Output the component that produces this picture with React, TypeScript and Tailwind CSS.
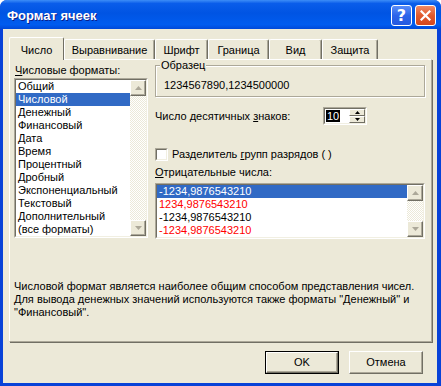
import React from 'react';

const formats = [
  'Общий',
  'Числовой',
  'Денежный',
  'Финансовый',
  'Дата',
  'Время',
  'Процентный',
  'Дробный',
  'Экспоненциальный',
  'Текстовый',
  'Дополнительный',
  '(все форматы)',
];

const negatives = [
  { text: '-1234,9876543210', red: false },
  { text: '1234,9876543210', red: true },
  { text: '-1234,9876543210', red: false },
  { text: '-1234,9876543210', red: true },
];

const tabs = [
  { label: 'Выравнивание', width: 'w-[91px]' },
  { label: 'Шрифт', width: 'w-[53px]' },
  { label: 'Граница', width: 'w-[61px]' },
  { label: 'Вид', width: 'w-[53px]' },
  { label: 'Защита', width: 'w-[56px]' },
];

const Arrow: React.FC<{ down?: boolean }> = ({ down }) => (
  <svg width="7" height="4" viewBox="0 0 7 4" className="block">
    {down ? <path d="M0 0h7L3.5 4z" fill="#ACA899" /> : <path d="M3.5 0L7 4H0z" fill="#ACA899" />}
  </svg>
);

const ScrollButton: React.FC<{ down?: boolean }> = ({ down }) => (
  <div className="w-[16px] h-[16px] flex items-center justify-center bg-[#ECE9D8] border border-t-white border-l-white border-r-[#716F64] border-b-[#716F64] shadow-[inset_-1px_-1px_0_#ACA899]">
    <Arrow down={down} />
  </div>
);

const ScrollBar: React.FC = () => (
  <div className="w-[16px] flex flex-col shrink-0">
    <ScrollButton />
    <div className="flex-1 bg-[repeating-conic-gradient(#ffffff_0_25%,#ece9d8_0_50%)] bg-[length:2px_2px]" />
    <ScrollButton down />
  </div>
);

// classic 2px sunken frame
const Sunken: React.FC<{ className?: string; children: React.ReactNode }> = ({ className, children }) => (
  <div className={`border border-t-[#ACA899] border-l-[#ACA899] border-b-white border-r-white ${className ?? ''}`}>
    <div className="h-full border border-t-[#716F64] border-l-[#716F64] border-b-[#F1EFE2] border-r-[#F1EFE2] bg-white flex">
      {children}
    </div>
  </div>
);

const App: React.FC = () => {
  return (
    <div className="w-[441px] h-[386px] bg-white font-['Liberation_Sans',Arial,sans-serif] text-[11px] leading-[13px] text-black">
      <div className="w-full h-full flex flex-col rounded-t-[7px] bg-[#0842D8] overflow-hidden">
        {/* title bar */}
        <div className="h-[29px] shrink-0 flex items-start bg-[linear-gradient(180deg,#3D8DF7_0%,#0A5DEA_12%,#0054E3_45%,#005CEF_85%,#0048D8_100%)]">
          <div className="pl-[7px] pt-[8px] text-[13px] leading-[15px] font-bold text-white [text-shadow:1px_1px_0_#0A1E8A]">
            Формат ячеек
          </div>
          <div className="ml-auto mt-[5px] mr-[5px] flex gap-[3px]">
            <div className="w-[21px] h-[21px] rounded-[3px] border border-white bg-[linear-gradient(180deg,#5A8EF8_0%,#2C64EA_50%,#2459E0_100%)] flex items-center justify-center text-white font-bold text-[16px] leading-none font-['DejaVu_Sans',sans-serif]">
              ?
            </div>
            <div className="w-[21px] h-[21px] rounded-[3px] border border-white bg-[linear-gradient(180deg,#F08A64_0%,#E15A2E_50%,#D4461C_100%)] flex items-center justify-center">
              <svg width="11" height="11" viewBox="0 0 11 11">
                <path d="M1.5 1.5l8 8M9.5 1.5l-8 8" stroke="#fff" strokeWidth="2.2" strokeLinecap="square" />
              </svg>
            </div>
          </div>
        </div>

        {/* client area */}
        <div className="flex-1 ml-[3px] mr-[4px] mb-[3px] bg-[#ECE9D8] pl-[6px] pt-[8px] flex flex-col">
          {/* tab strip */}
          <div className="h-[22px] flex items-start relative z-10">
            <div className="w-[55px] h-[23px] bg-[#ECE9D8] border-l border-t border-r border-l-white border-t-white border-r-[#716F64] rounded-t-[2px] flex justify-center pt-[6px]">
              Число
            </div>
            {tabs.map((t) => (
              <div
                key={t.label}
                className={`${t.width} h-[20px] mt-[2px] bg-[#ECE9D8] border-l border-t border-r border-l-white border-t-white border-r-[#716F64] shadow-[inset_-1px_0_0_#ACA899] rounded-t-[2px] flex justify-center pt-[4px]`}
              >
                {t.label}
              </div>
            ))}
          </div>

          {/* tab panel */}
          <div className="w-[423px] h-[283px] border border-t-white border-l-white border-r-[#ACA899] border-b-[#ACA899] shadow-[1px_1px_0_#716F64] flex flex-col">
            <div className="flex pl-[4px] pt-[4px]">
              {/* left column */}
              <div className="w-[134px] flex flex-col">
                <div className="ml-px">
                  <span className="underline">Ч</span>исловые форматы:
                </div>
                <Sunken className="mt-px h-[160px]">
                  <div className="flex-1 flex flex-col">
                    {formats.map((f, i) => (
                      <div
                        key={f}
                        className={`h-[13px] pl-[2px] whitespace-nowrap ${i === 1 ? 'bg-[#316AC5] text-white' : ''}`}
                      >
                        {f}
                      </div>
                    ))}
                  </div>
                  <ScrollBar />
                </Sunken>
              </div>

              {/* right column */}
              <div className="w-[270px] ml-[7px] flex flex-col">
                <div className="mt-[1px] border border-[#ACA899] shadow-[inset_1px_1px_0_#fff,1px_1px_0_#fff] flex flex-col pl-[8px] pb-[4px]">
                  <span className="-mt-[7px] -ml-[4px] px-px bg-[#ECE9D8] self-start">Образец</span>
                  <div className="mt-[7px]">1234567890,1234500000</div>
                </div>

                <div className="mt-[10px] h-[18px] flex items-center">
                  <div className="w-[168px]">
                    Число десятичных <span className="underline">з</span>наков:
                  </div>
                  <Sunken className="w-[44px] h-[18px]">
                    <div className="flex-1 flex items-center pl-[1px]">
                      <span className="bg-black text-white px-px leading-[12px]">10</span>
                    </div>
                    <div className="w-[16px] flex flex-col">
                      <div className="flex-1 flex items-center justify-center bg-[#ECE9D8] border border-t-white border-l-white border-r-[#716F64] border-b-[#716F64]">
                        <svg width="5" height="3" viewBox="0 0 5 3">
                          <path d="M2.5 0L5 3H0z" fill="#000" />
                        </svg>
                      </div>
                      <div className="flex-1 flex items-center justify-center bg-[#ECE9D8] border border-t-white border-l-white border-r-[#716F64] border-b-[#716F64]">
                        <svg width="5" height="3" viewBox="0 0 5 3">
                          <path d="M0 0h5L2.5 3z" fill="#000" />
                        </svg>
                      </div>
                    </div>
                  </Sunken>
                </div>

                <div className="mt-[23px] h-[13px] flex items-center">
                  <div className="w-[13px] h-[13px] bg-white border border-t-[#ACA899] border-l-[#ACA899] border-b-white border-r-white">
                    <div className="w-full h-full border border-t-[#716F64] border-l-[#716F64] border-b-[#F1EFE2] border-r-[#F1EFE2]" />
                  </div>
                  <div className="ml-[4px]">
                    Разделитель <span className="underline">г</span>рупп разрядов ( )
                  </div>
                </div>

                <div className="mt-[5px]">
                  <span className="underline">О</span>трицательные числа:
                </div>
                <Sunken className="mt-[4px] h-[56px]">
                  <div className="flex-1 flex flex-col">
                    {negatives.map((n, i) => (
                      <div
                        key={i}
                        className={`h-[13px] pl-[2px] whitespace-nowrap ${
                          i === 0 ? 'bg-[#316AC5] text-white' : n.red ? 'text-[#FF0000]' : ''
                        }`}
                      >
                        {n.text}
                      </div>
                    ))}
                  </div>
                  <ScrollBar />
                </Sunken>
              </div>
            </div>

            <div className="mt-[41px] pl-[4px] w-[420px]">
              <div>Числовой формат является наиболее общим способом представления чисел.</div>
              <div>Для вывода денежных значений используются также форматы "Денежный" и</div>
              <div>"Финансовый".</div>
            </div>
          </div>

          {/* buttons */}
          <div className="mt-[9px] pr-[14px] flex justify-end gap-[10px]">
            <button className="w-[74px] h-[23px] border border-black bg-[#ECE9D8]">
              <div className="w-full h-full flex items-center justify-center border border-t-white border-l-white border-r-[#716F64] border-b-[#716F64] shadow-[inset_-1px_-1px_0_#ACA899]">
                OK
              </div>
            </button>
            <button className="w-[74px] h-[23px] bg-[#ECE9D8] flex items-center justify-center border border-t-white border-l-white border-r-[#716F64] border-b-[#716F64] shadow-[inset_-1px_-1px_0_#ACA899]">
              Отмена
            </button>
          </div>
        </div>
      </div>
    </div>
  );
};

export default App;
